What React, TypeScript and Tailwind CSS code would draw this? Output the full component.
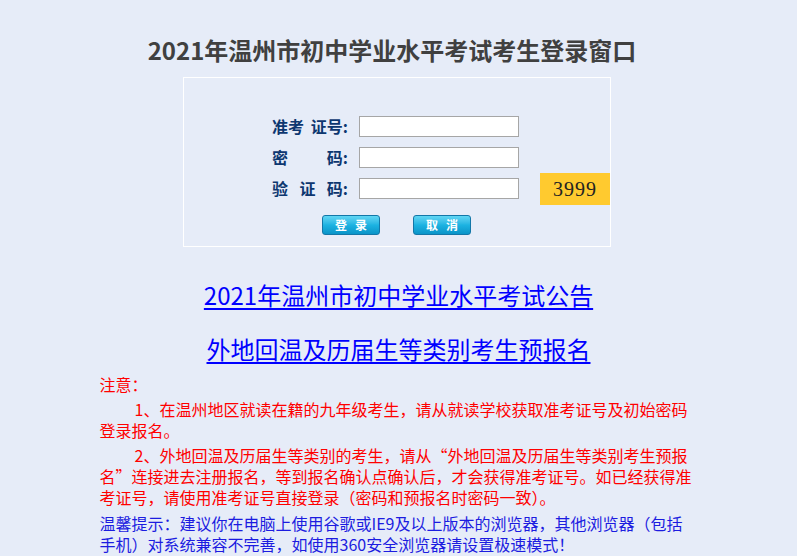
const CJK = '"Noto Sans CJK SC", "Noto Sans", sans-serif'

const rows: { parts: string[]; captcha?: boolean }[] = [
  { parts: ['准考', '证号:'] },
  { parts: ['密', '码:'] },
  { parts: ['验', '证', '码:'], captcha: true },
]

function LoginButton({ label }: { label: string[] }) {
  return (
    <button
      type="button"
      className="flex h-[20px] w-[58px] items-center justify-center gap-[8px] rounded-[3px] border border-[#1377a8] bg-gradient-to-b from-[#5fd6f4] via-[#1cb3e2] to-[#0a94c8] text-[12px] font-bold leading-none text-white"
    >
      {label.map(c => (
        <span key={c}>{c}</span>
      ))}
    </button>
  )
}

export default function App() {
  return (
    <div className="min-h-[556px] w-full bg-[#e6ecf8]" style={{ fontFamily: CJK }}>
      {/* Title */}
      <h1 className="pr-[13px] pt-[32px] text-center text-[24px] font-bold leading-[36px] text-[#404040]">
        2021年温州市初中学业水平考试考生登录窗口
      </h1>

      {/* Login box */}
      <div className="mt-[9px] flex justify-center pr-[3px]">
        <div className="h-[170px] w-[428px] border border-white pl-[88px] pt-[38px]">
          <div className="grid grid-cols-[76px_160px_70px] items-center gap-x-[11px] gap-y-[10px]">
            {rows.map((row, i) => (
              <div key={i} className="contents">
                <div className="flex justify-between text-[16px] font-bold leading-[21px] text-[#0d3770]">
                  {row.parts.map(p => (
                    <span key={p}>{p}</span>
                  ))}
                </div>
                <input
                  type={i === 1 ? 'password' : 'text'}
                  className="h-[21px] w-[160px] border border-[#a6a6a6] bg-white outline-none"
                />
                {row.captcha ? (
                  <div className="-my-[6px] ml-[10px] flex h-[32px] w-[70px] items-center justify-center bg-[#ffca2f] font-['Liberation_Serif',serif] text-[20px] tracking-[1px] text-[#222]">
                    3999
                  </div>
                ) : (
                  <div />
                )}
              </div>
            ))}
          </div>
          <div className="mt-[16px] flex gap-[33px] pl-[50px]">
            <LoginButton label={['登', '录']} />
            <LoginButton label={['取', '消']} />
          </div>
        </div>
      </div>

      {/* Links */}
      <div className="mt-[33px] flex flex-col items-center gap-[24px] text-[24px] leading-[30px]">
        <a href="#" className="text-[#0000ff] underline underline-offset-[3px]">
          2021年温州市初中学业水平考试公告
        </a>
        <a href="#" className="text-[#0000ff] underline underline-offset-[3px]">
          外地回温及历届生等类别考生预报名
        </a>
      </div>

      {/* Notes */}
      <div className="mx-auto mt-[10px] w-[598px] pb-[4px] text-[16px] leading-[21px]">
        <p className="text-[#ff0000]">注意：</p>
        <p className="mt-[4px] indent-[35px] text-[#ff0000]">
          1、在温州地区就读在籍的九年级考生，请从就读学校获取准考证号及初始密码登录报名。
        </p>
        <p className="mt-[4px] indent-[35px] text-[#ff0000]">
          2、外地回温及历届生等类别的考生，请从“外地回温及历届生等类别考生预报名”连接进去注册报名，等到报名确认点确认后，才会获得准考证号。如已经获得准考证号，请使用准考证号直接登录（密码和预报名时密码一致）。
        </p>
        <p className="mt-[5px] text-[#1c1ce0]">
          温馨提示：建议你在电脑上使用谷歌或IE9及以上版本的浏览器，其他浏览器（包括手机）对系统兼容不完善，如使用360安全浏览器请设置极速模式！
        </p>
      </div>
    </div>
  )
}
